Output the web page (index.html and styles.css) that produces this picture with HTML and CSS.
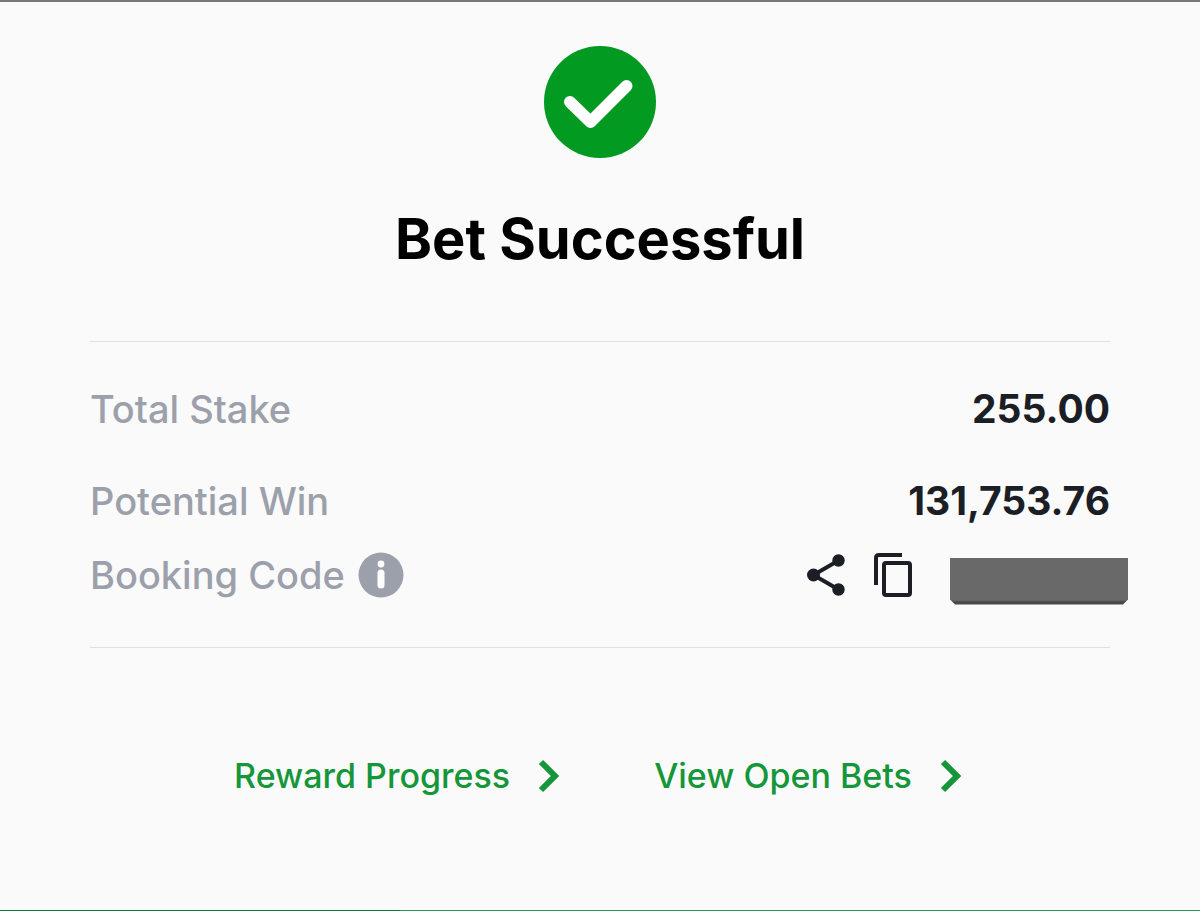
FILE: index.html
```html
<!DOCTYPE html>
<html lang="en">
<head>
  <meta charset="utf-8">
  <meta name="viewport" content="width=device-width, initial-scale=1">
  <title>Bet Successful</title>
  <link rel="stylesheet" href="styles.css">
</head>
<body>
  <main class="receipt">
    <svg class="success-icon" viewBox="0 0 112 112" aria-hidden="true">
      <circle cx="56" cy="56" r="56" fill="#039a21"/>
      <path d="M26 56 L46.500 76 L82.500 40" fill="none" stroke="#fff" stroke-width="12" stroke-linecap="round" stroke-linejoin="round"/>
    </svg>
    <h1>Bet Successful</h1>

    <dl class="details">
      <div class="row">
        <dt>Total Stake</dt>
        <dd>255.00</dd>
      </div>
      <div class="row">
        <dt>Potential Win</dt>
        <dd>131,753.76</dd>
      </div>
      <div class="row row-code">
        <dt>
          Booking Code
          <button type="button" class="icon-btn" aria-label="About booking code">
            <svg width="46" height="46" viewBox="0 0 46 46">
              <circle cx="23" cy="23" r="22.500" fill="#9ca0ab"/>
              <circle cx="23" cy="12" r="3.400" fill="#fff"/>
              <path d="M23 21V33" stroke="#fff" stroke-width="7" stroke-linecap="round"/>
            </svg>
          </button>
        </dt>
        <dd class="code">
          <button type="button" class="icon-btn" aria-label="Share">
            <svg width="38" height="42" viewBox="0 0 38 42">
              <path d="M31.500 6.500L6.500 21L31.500 35.500" fill="none" stroke="#1b1e25" stroke-width="4"/>
              <g fill="#1b1e25">
                <circle cx="31.500" cy="6.500" r="6.200"/>
                <circle cx="6.500" cy="21" r="6.500"/>
                <circle cx="31.500" cy="35.500" r="6.200"/>
              </g>
            </svg>
          </button>
          <button type="button" class="icon-btn copy" aria-label="Copy">
            <svg width="38" height="44" viewBox="0 0 38 44" fill="none" stroke="#1b1e25" stroke-width="4">
              <path d="M28 2H5Q2 2 2 5V32"/>
              <rect x="10" y="10" width="26" height="32" rx="2"/>
            </svg>
          </button>
          <span class="hidden-code"></span>
        </dd>
      </div>
    </dl>

    <nav class="links">
      <a href="#rewards">Reward Progress
        <svg width="26" height="34" viewBox="0 0 26 34"><path d="M3 3L17 17L3 31" fill="none" stroke="#149639" stroke-width="6"/></svg>
      </a>
      <a href="#bets">View Open Bets
        <svg width="26" height="34" viewBox="0 0 26 34"><path d="M3 3L17 17L3 31" fill="none" stroke="#149639" stroke-width="6"/></svg>
      </a>
    </nav>
  </main>
  <footer class="bottom-bar"></footer>
</body>
</html>
```
FILE: styles.css
```css
* {
  box-sizing: border-box;
}
body {
  margin: 0;
  min-height: 100vh;
  display: flex;
  flex-direction: column;
  background: #fafafa;
  border-top: 2px solid #777;
  font-family: Inter, "Liberation Sans", sans-serif;
}
.receipt {
  flex: 1;
  display: flex;
  flex-direction: column;
  align-items: center;
  padding: 44px 90px 0;
}
.success-icon {
  width: 112px;
  height: 112px;
}
h1 {
  margin: 46px 0 67px;
  font-size: 56px;
  line-height: 70px;
  font-weight: 700;
  color: #000;
}
.details {
  width: 100%;
  margin: 0;
  padding: 43px 0 48px;
  border-top: 1px solid #dfe1e5;
  border-bottom: 1px solid #dfe1e5;
  font-size: 38px;
  line-height: 48px;
}
.row {
  display: flex;
  justify-content: space-between;
  align-items: center;
  margin-bottom: 44px;
}
.row:nth-child(2) {
  margin-bottom: 26px;
}
.row-code {
  margin-bottom: 0;
}
dt {
  display: flex;
  align-items: center;
  gap: 13px;
  font-weight: 500;
  color: #9ca0ab;
}
dd {
  margin: 0;
  font-size: 39px;
  font-weight: 700;
  color: #1b1e25;
}
.icon-btn {
  display: flex;
  padding: 0;
  border: none;
  background: none;
  cursor: pointer;
}
.code {
  display: flex;
  align-items: center;
  /* the code plate hangs over the right edge */
  margin-right: -18px;
}
.copy {
  margin: 0 38px 0 29px;
}
.hidden-code {
  width: 178px;
  height: 47px;
  margin: 6px 0 -6px;
  background: linear-gradient(#696969 0 42px, #484848 44px);
  clip-path: polygon(0 0, 100% 0, 100% 42px, 173px 100%, 5px 100%, 0 42px);
}
.links {
  display: flex;
  gap: 90px;
  margin-top: 103px;
}
.links a {
  display: flex;
  align-items: center;
  gap: 28px;
  font-size: 34px;
  line-height: 50px;
  font-weight: 500;
  color: #149639;
  text-decoration: none;
}
.bottom-bar {
  height: 1px;
  background: linear-gradient(to right, #14773a 33.3%, #1f9e48 33.3%);
}
```
